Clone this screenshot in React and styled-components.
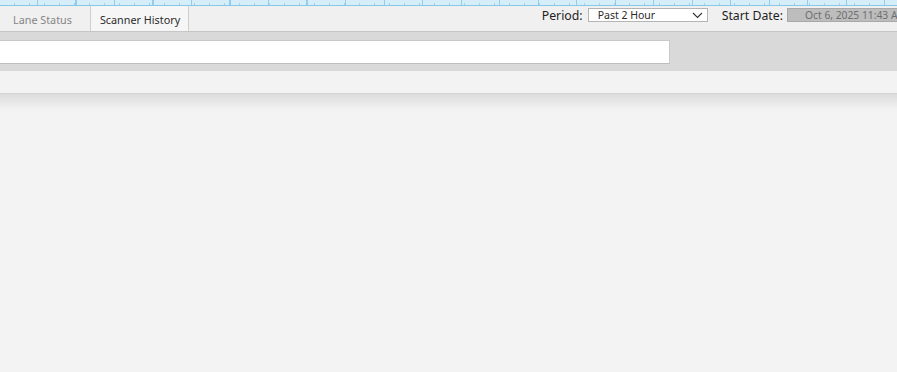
import React from "react";
import styled, { createGlobalStyle } from "styled-components";

const Global = createGlobalStyle`
  html, body { margin: 0; padding: 0; background: #f3f3f3; overflow: hidden; }
  body { font-family: "Noto Sans", "Open Sans", sans-serif; }
  * { box-sizing: border-box; }
`;

const Page = styled.div`
  width: 897px;
  height: 372px;
  background: #f3f3f3;
  display: flex;
  flex-direction: column;
  overflow: hidden;
`;

const Ruler = styled.div`
  height: 6px;
  flex: 0 0 6px;
  background-color: #d6eefa;
  border-bottom: 1px solid #86c8e8;
  background-image:
    repeating-linear-gradient(90deg, transparent 0 37px, #94cde9 37px 38.5px),
    repeating-linear-gradient(90deg, transparent 0 7px, #9fd3ec 7px 7.5px);
  background-size: 100% 5px, 100% 2px;
  background-position: 0 0, 0 3px;
  background-repeat: no-repeat;
`;

const TabBar = styled.div`
  height: 26px;
  flex: 0 0 26px;
  display: flex;
  align-items: stretch;
  background: #f0f0f0;
  border-bottom: 1px solid #c6c6c6;
`;

const Tab = styled.div`
  display: flex;
  align-items: center;
  padding: 1px ${(p) => (p.$active ? "8px" : "18px")} 0 ${(p) => (p.$active ? "9px" : "13px")};
  font-size: 10.8px;
  color: ${(p) => (p.$active ? "#2b2b2b" : "#858585")};
  background: ${(p) => (p.$active ? "#f6f6f6" : "transparent")};
  border-right: 1px solid #cfcfcf;
  white-space: nowrap;
`;

const Controls = styled.div`
  margin-left: auto;
  display: flex;
  align-items: center;
  padding-bottom: 7px;
`;

const Label = styled.span`
  font-size: 12.3px;
  color: #1e1e1e;
  margin-right: ${(p) => p.$gap}px;
  white-space: nowrap;
`;

const Select = styled.div`
  width: 120px;
  height: 14px;
  display: flex;
  align-items: center;
  justify-content: space-between;
  background: #ffffff;
  border: 1px solid #b4b4b4;
  padding: 0 4px 0 9px;
  margin-right: 14px;
  font-size: 10.5px;
  color: #2a2a2a;
`;

const DateBox = styled.div`
  width: 110px;
  height: 14px;
  display: flex;
  align-items: center;
  background: #bdbdbd;
  border: 1px solid #a9a9a9;
  border-right: none;
  padding-left: 17px;
  font-size: 10.3px;
  color: #6e6e6e;
  white-space: nowrap;
  overflow: hidden;
`;

const SearchBand = styled.div`
  flex: 0 0 39px;
  display: flex;
  align-items: flex-start;
  padding-top: 8px;
  background: #d9d9d9;
`;

const SearchInput = styled.div`
  width: 670px;
  height: 24px;
  background: #ffffff;
  border: 1px solid #c9c9c9;
  border-left: none;
  border-bottom-color: #bdbdbd;
`;

const InfoBand = styled.div`
  flex: 0 0 23px;
  background: #f3f3f3;
  border-bottom: 1px solid #d2d2d2;
`;

const Shadow = styled.div`
  flex: 0 0 16px;
  background: linear-gradient(#dcdcdc, #f3f3f3);
`;

const Chevron = () => (
  <svg width="11" height="7" viewBox="0 0 11 7">
    <path d="M1 1 L5.5 5.5 L10 1" fill="none" stroke="#333" strokeWidth="1.1" />
  </svg>
);

export default function App() {
  return (
    <Page>
      <Global />
      <Ruler />
      <TabBar>
        <Tab>Lane Status</Tab>
        <Tab $active>Scanner History</Tab>
        <Controls>
          <Label $gap={5}>Period:</Label>
          <Select>
            <span>Past 2 Hour</span>
            <Chevron />
          </Select>
          <Label $gap={4}>Start Date:</Label>
          <DateBox>Oct 6, 2025 11:43 AM</DateBox>
        </Controls>
      </TabBar>
      <SearchBand>
        <SearchInput />
      </SearchBand>
      <InfoBand />
      <Shadow />
    </Page>
  );
}
